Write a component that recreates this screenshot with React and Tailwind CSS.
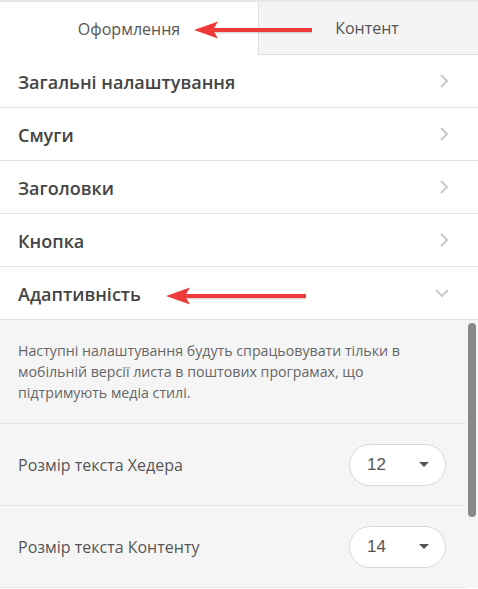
import React from 'react';

const font = { fontFamily: '"Open Sans", "Noto Sans", sans-serif' };

const Arrow = ({ className, width }) => (
  <svg className={className} width={width} height="20" viewBox={`0 0 ${width} 20`}>
    <g transform="translate(0,1)" fill="#9e9e9e" opacity="0.35">
      <rect x="18" y="8.5" width={width - 20} height="4" />
    </g>
    <rect x="18" y="8" width={width - 20} height="4" fill="#ee3a3a" />
    <path d="M0 10 L24 1.5 L19 10 L24 18.5 Z" fill="#ee3a3a" />
  </svg>
);

const ChevronRight = () => (
  <svg width="12" height="16" viewBox="0 0 12 16" className="text-[#c8c8c8]">
    <path d="M3 2 L9 8 L3 14" fill="none" stroke="currentColor" strokeWidth="2" />
  </svg>
);

const ChevronDown = () => (
  <svg width="16" height="12" viewBox="0 0 16 12" className="text-[#c8c8c8]">
    <path d="M2 3 L8 9 L14 3" fill="none" stroke="currentColor" strokeWidth="2" />
  </svg>
);

const Row = ({ title, open }) => (
  <div className="h-[53px] border-b border-[#e3e3e3] flex items-center justify-between pl-[18px] pr-[28px] bg-white">
    <span className="text-[18px] font-semibold text-[#444] pt-[2px]">{title}</span>
    {open ? <ChevronDown /> : <ChevronRight />}
  </div>
);

const SelectRow = ({ label, value }) => (
  <div className="h-[82px] border-b border-[#e3e3e3] flex items-center justify-between pl-[18px] pr-[20px]">
    <span className="text-[16px] text-[#555]">{label}</span>
    <div className="w-[97px] h-[42px] rounded-full bg-white border border-[#d9d9d9] flex items-center justify-between pl-[17px] pr-[16px]">
      <span className="text-[17px] text-[#555]" style={{ fontFamily: '"Liberation Sans", Arial, sans-serif' }}>{value}</span>
      <svg width="10" height="6" viewBox="0 0 10 6"><path d="M0 0 L10 0 L5 5 Z" fill="#555" /></svg>
    </div>
  </div>
);

export default function App() {
  return (
    <div className="w-[478px] h-[589px] overflow-hidden bg-white relative" style={font}>
      {/* tabs */}
      <div className="flex h-[55px] border-t-2 border-[#e6e6e6]">
        <div className="w-[258px] flex items-center justify-center bg-white">
          <span className="text-[16px] text-[#555]">Оформлення</span>
        </div>
        <div className="flex-1 flex items-center justify-center bg-[#f4f4f4] border-l border-b border-[#e0e0e0]">
          <span className="text-[16px] text-[#555] pr-[3px]">Контент</span>
        </div>
      </div>
      <Arrow className="absolute left-[194px] top-[20px]" width={120} />

      {/* sections */}
      <div className="border-t border-[#e3e3e3] -mt-px">
        <Row title="Загальні налаштування" />
        <Row title="Смуги" />
        <Row title="Заголовки" />
        <Row title="Кнопка" />
        <Row title="Адаптивність" open />
      </div>
      <Arrow className="absolute left-[166px] top-[286px]" width={142} />

      {/* expanded panel */}
      <div className="bg-[#f5f5f5] flex">
        <div className="flex-1">
          <div className="pl-[18px] pr-[20px] pt-[20px] pb-[20px] border-b border-[#e3e3e3]">
            <p className="text-[14.2px] leading-[21px] text-[#666]">
              Наступні налаштування будуть спрацьовувати тільки в мобільній версії листа в поштових програмах, що підтримують медіа стилі.
            </p>
          </div>
          <SelectRow label="Розмір текста Хедера" value="12" />
          <SelectRow label="Розмір текста Контенту" value="14" />
        </div>
        <div className="w-[12px] pl-[2px] pt-[3px]">
          <div className="w-[8px] h-[194px] rounded-full bg-[#888]" />
        </div>
      </div>
    </div>
  );
}
